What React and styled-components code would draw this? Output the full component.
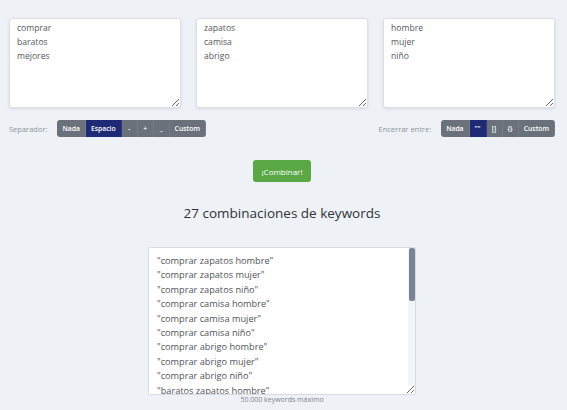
import React, { useState } from 'react';
import styled, { createGlobalStyle } from 'styled-components';

const GlobalStyle = createGlobalStyle`
  html, body {
    margin: 0;
    padding: 0;
    background: #eef1f6;
    font-family: 'Open Sans', 'Noto Sans', sans-serif;
  }
`;

const words = [
  ['comprar', 'baratos', 'mejores'],
  ['zapatos', 'camisa', 'abrigo'],
  ['hombre', 'mujer', 'niño'],
];

const separators = ['Nada', 'Espacio', '-', '+', '_', 'Custom'];
const wrappers = ['Nada', '""', '[]', '{}', 'Custom'];

const combine = (lists, sep, wrap) => {
  let out = [''];
  lists.forEach((list, i) => {
    const next = [];
    out.forEach((prefix) => {
      list.forEach((w) => next.push(i === 0 ? w : prefix + sep + w));
    });
    out = next;
  });
  return out.map((k) => wrap[0] + k + wrap[1]);
};

const App = () => {
  const [sep, setSep] = useState('Espacio');
  const [wrap, setWrap] = useState('""');
  const keywords = combine(words, ' ', ['"', '"']);

  return (
    <Page>
      <GlobalStyle />
      <Inputs>
        {words.map((list, i) => (
          <WordBox key={i} defaultValue={list.join('\n')} />
        ))}
      </Inputs>

      <Options>
        <OptionGroup>
          <Label>Separador:</Label>
          <ButtonGroup>
            {separators.map((s) => (
              <GroupButton key={s} $active={s === sep} onClick={() => setSep(s)}>
                {s}
              </GroupButton>
            ))}
          </ButtonGroup>
        </OptionGroup>
        <OptionGroup>
          <Label>Encerrar entre:</Label>
          <ButtonGroup>
            {wrappers.map((w) => (
              <GroupButton key={w} $active={w === wrap} onClick={() => setWrap(w)}>
                {w}
              </GroupButton>
            ))}
          </ButtonGroup>
        </OptionGroup>
      </Options>

      <CombineButton>¡Combinar!</CombineButton>

      <Title>{keywords.length} combinaciones de keywords</Title>

      <ResultWrap>
        <Result readOnly value={keywords.join('\n')} />
        <ScrollTrack>
          <ScrollThumb />
        </ScrollTrack>
      </ResultWrap>
      <Note>50.000 keywords máximo</Note>
    </Page>
  );
};

const Page = styled.div`
  padding: 18px 12px 0 9px;
  display: flex;
  flex-direction: column;
  align-items: center;
`;

const Inputs = styled.div`
  width: 100%;
  display: grid;
  grid-template-columns: repeat(3, 1fr);
  gap: 15px;
`;

const WordBox = styled.textarea`
  box-sizing: border-box;
  height: 90px;
  padding: 2px 7px;
  border: 1px solid #dde1e7;
  border-radius: 3px;
  background: #fff;
  box-shadow: 0 1px 3px rgba(40, 50, 70, 0.12);
  font-family: 'Open Sans', 'Noto Sans', sans-serif;
  font-size: 8.6px;
  line-height: 14px;
  color: #555a60;
  outline: none;
`;

const Options = styled.div`
  width: 100%;
  margin-top: 12px;
  display: flex;
  justify-content: space-between;
  align-items: center;
`;

const OptionGroup = styled.div`
  display: flex;
  align-items: center;
`;

const Label = styled.span`
  font-size: 7.5px;
  color: #8d939b;
  margin-right: 10px;
`;

const ButtonGroup = styled.div`
  display: flex;
  border-radius: 3px;
  overflow: hidden;
`;

const GroupButton = styled.button`
  height: 17px;
  padding: 0 5px;
  min-width: 16px;
  border: none;
  border-right: 1px solid rgba(255, 255, 255, 0.08);
  background: ${(p) => (p.$active ? '#1f2a77' : '#6b717b')};
  color: #fff;
  font-family: 'Open Sans', 'Noto Sans', sans-serif;
  font-size: 6.8px;
  font-weight: 600;
  cursor: pointer;
`;

const CombineButton = styled.button`
  margin-top: 23px;
  height: 22px;
  width: 58px;
  padding: 0;
  border: none;
  border-radius: 3px;
  background: #5aa845;
  color: #fff;
  font-family: 'Open Sans', 'Noto Sans', sans-serif;
  font-size: 8px;
  cursor: pointer;
`;

const Title = styled.h2`
  margin: 21px 0 0;
  font-size: 13.5px;
  font-weight: 400;
  color: #2f3338;
  line-height: 20px;
`;

const ResultWrap = styled.div`
  position: relative;
  margin-top: 24px;
  width: 268px;
  height: 148px;
`;

const Result = styled.textarea`
  box-sizing: border-box;
  display: block;
  width: 100%;
  height: 100%;
  padding: 6px 14px 5px 8px;
  border: 1px solid #d8dce2;
  border-radius: 2px;
  background: #fff;
  font-family: 'Open Sans', 'Noto Sans', sans-serif;
  font-size: 9.2px;
  line-height: 14.4px;
  color: #4f545a;
  outline: none;
  resize: vertical;
  scrollbar-width: none;

  &::-webkit-scrollbar {
    display: none;
  }
`;

const ScrollTrack = styled.div`
  position: absolute;
  top: 1px;
  right: 1px;
  bottom: 9px;
  width: 7px;
  background: #f3f4f7;
  pointer-events: none;
`;

const ScrollThumb = styled.div`
  width: 6px;
  height: 53px;
  margin-left: 0.5px;
  background: #7b8397;
  border-radius: 2px;
`;

const Note = styled.div`
  margin-top: 0;
  font-size: 7px;
  color: #7f858d;
`;

export default App;
